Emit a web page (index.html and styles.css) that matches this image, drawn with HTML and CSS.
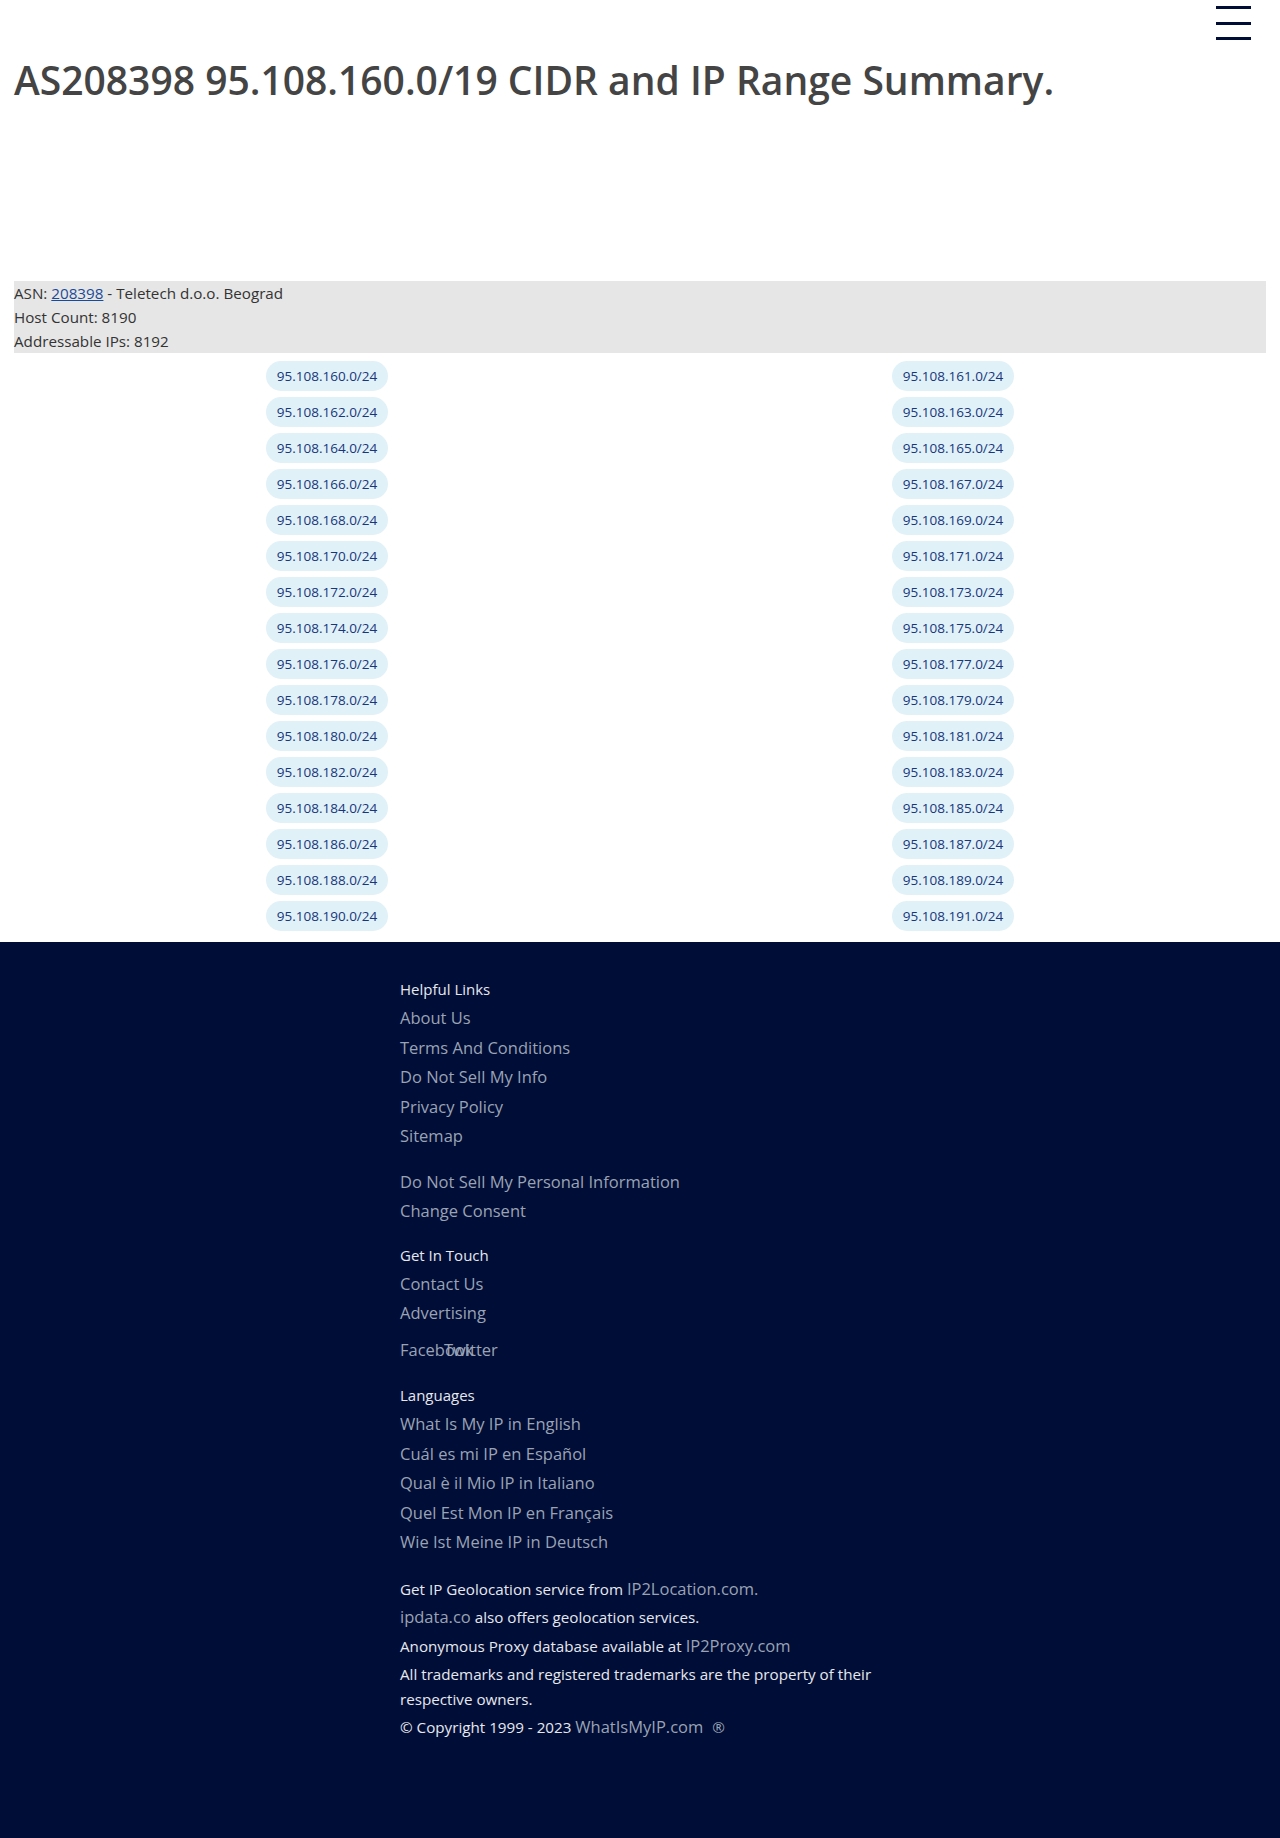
FILE: index.html
```html
<!DOCTYPE html>
<html lang="en">
<head>
<meta charset="utf-8">
<title>AS208398 95.108.160.0/19 CIDR and IP Range Summary.</title>
<link rel="stylesheet" href="styles.css">
</head>
<body>
<header class="topbar">
  <button class="burger" aria-label="Menu"><span></span><span></span><span></span></button>
</header>
<main class="page">
  <h1 class="title">AS208398 95.108.160.0/19 CIDR and IP Range Summary.</h1>
  <div class="adspace"></div>
  <div class="summary">
    <div>ASN: <a href="#">208398</a> - Teletech d.o.o. Beograd</div>
    <div>Host Count: 8190</div>
    <div>Addressable IPs: 8192</div>
  </div>
  <div class="ranges">
    <div class="cell"><a class="pill" href="#">95.108.160.0/24</a></div>
    <div class="cell"><a class="pill" href="#">95.108.161.0/24</a></div>
    <div class="cell"><a class="pill" href="#">95.108.162.0/24</a></div>
    <div class="cell"><a class="pill" href="#">95.108.163.0/24</a></div>
    <div class="cell"><a class="pill" href="#">95.108.164.0/24</a></div>
    <div class="cell"><a class="pill" href="#">95.108.165.0/24</a></div>
    <div class="cell"><a class="pill" href="#">95.108.166.0/24</a></div>
    <div class="cell"><a class="pill" href="#">95.108.167.0/24</a></div>
    <div class="cell"><a class="pill" href="#">95.108.168.0/24</a></div>
    <div class="cell"><a class="pill" href="#">95.108.169.0/24</a></div>
    <div class="cell"><a class="pill" href="#">95.108.170.0/24</a></div>
    <div class="cell"><a class="pill" href="#">95.108.171.0/24</a></div>
    <div class="cell"><a class="pill" href="#">95.108.172.0/24</a></div>
    <div class="cell"><a class="pill" href="#">95.108.173.0/24</a></div>
    <div class="cell"><a class="pill" href="#">95.108.174.0/24</a></div>
    <div class="cell"><a class="pill" href="#">95.108.175.0/24</a></div>
    <div class="cell"><a class="pill" href="#">95.108.176.0/24</a></div>
    <div class="cell"><a class="pill" href="#">95.108.177.0/24</a></div>
    <div class="cell"><a class="pill" href="#">95.108.178.0/24</a></div>
    <div class="cell"><a class="pill" href="#">95.108.179.0/24</a></div>
    <div class="cell"><a class="pill" href="#">95.108.180.0/24</a></div>
    <div class="cell"><a class="pill" href="#">95.108.181.0/24</a></div>
    <div class="cell"><a class="pill" href="#">95.108.182.0/24</a></div>
    <div class="cell"><a class="pill" href="#">95.108.183.0/24</a></div>
    <div class="cell"><a class="pill" href="#">95.108.184.0/24</a></div>
    <div class="cell"><a class="pill" href="#">95.108.185.0/24</a></div>
    <div class="cell"><a class="pill" href="#">95.108.186.0/24</a></div>
    <div class="cell"><a class="pill" href="#">95.108.187.0/24</a></div>
    <div class="cell"><a class="pill" href="#">95.108.188.0/24</a></div>
    <div class="cell"><a class="pill" href="#">95.108.189.0/24</a></div>
    <div class="cell"><a class="pill" href="#">95.108.190.0/24</a></div>
    <div class="cell"><a class="pill" href="#">95.108.191.0/24</a></div>
  </div>
</main>
<footer class="footer">
  <div class="footer-inner">
    <section class="fsec">
      <h4 class="fhead">Helpful Links</h4>
      <a class="flink" href="#">About Us</a>
      <a class="flink" href="#">Terms And Conditions</a>
      <a class="flink" href="#">Do Not Sell My Info</a>
      <a class="flink" href="#">Privacy Policy</a>
      <a class="flink" href="#">Sitemap</a>
    </section>
    <section class="fsec">
      <a class="flink" href="#">Do Not Sell My Personal Information</a>
      <a class="flink" href="#">Change Consent</a>
    </section>
    <section class="fsec">
      <h4 class="fhead">Get In Touch</h4>
      <a class="flink" href="#">Contact Us</a>
      <a class="flink" href="#">Advertising</a>
      <div class="social"><a class="flink fb" href="#">Facebook</a><a class="flink tw" href="#">Twitter</a></div>
    </section>
    <section class="fsec">
      <h4 class="fhead">Languages</h4>
      <a class="flink" href="#">What Is My IP in English</a>
      <a class="flink" href="#">Cuál es mi IP en Español</a>
      <a class="flink" href="#">Qual è il Mio IP in Italiano</a>
      <a class="flink" href="#">Quel Est Mon IP en Français</a>
      <a class="flink" href="#">Wie Ist Meine IP in Deutsch</a>
    </section>
    <section class="fsec legal">
      <p class="fline">Get IP Geolocation service from <a href="#">IP2Location.com.</a></p>
      <p class="fline"><a href="#">ipdata.co</a> also offers geolocation services.</p>
      <p class="fline">Anonymous Proxy database available at <a href="#">IP2Proxy.com</a></p>
      <p class="fline">All trademarks and registered trademarks are the property of their respective owners.</p>
      <p class="fline">© Copyright 1999 - 2023 <a href="#">WhatIsMyIP.com</a><span class="reg">®</span></p>
    </section>
  </div>
</footer>
</body>
</html>
```
FILE: styles.css
```css
html, body {
  margin: 0;
  padding: 0;
}
body {
  font-family: "Open Sans", "Noto Sans", "Liberation Sans", sans-serif;
  color: #333;
  background: #fff;
}
.topbar {
  display: flex;
  justify-content: flex-end;
  padding: 6px 29px 0 14px;
  height: 40px;
  box-sizing: border-box;
}
.burger {
  display: flex;
  flex-direction: column;
  justify-content: space-between;
  width: 35px;
  height: 34px;
  padding: 0;
  border: 0;
  background: none;
}
.burger span {
  display: block;
  height: 3px;
  background: #000d36;
}
.page {
  padding: 0 14px;
}
.title {
  margin: 14px 0 0;
  font-size: 39px;
  line-height: 52px;
  font-weight: 600;
  color: #444;
}
.adspace {
  height: 175px;
}
.summary {
  background: #e6e6e6;
  font-size: 15.2px;
  line-height: 24px;
  color: #333;
}
.summary a {
  color: #1a4a9a;
}
.ranges {
  display: grid;
  grid-template-columns: 1fr 1fr;
  row-gap: 6px;
  padding: 8px 0 11px;
}
.cell {
  display: flex;
  justify-content: center;
}
.pill {
  display: inline-block;
  height: 30px;
  line-height: 30px;
  padding: 0 11px;
  border-radius: 15px;
  background: #e1f1f8;
  color: #17377c;
  font-size: 13.5px;
  text-decoration: none;
}
.footer {
  background: #000d36;
  min-height: 896px;
  padding: 34px 0 100px;
  box-sizing: border-box;
}
.footer-inner {
  width: 480px;
  margin: 0 auto;
  display: flex;
  flex-direction: column;
  gap: 16px;
}
.fsec {
  display: flex;
  flex-direction: column;
  align-items: flex-start;
}
.fhead {
  margin: 0;
  font-size: 15px;
  line-height: 27px;
  font-weight: 400;
  color: #e6e8ee;
}
.flink {
  font-size: 16.5px;
  line-height: 29.5px;
  color: #9aa3b5;
  text-decoration: none;
}
.social {
  display: flex;
  margin: 7px 0 2px;
}
.social .fb {
  width: 44px;
  white-space: nowrap;
}
.legal {
  margin-top: 2px;
}
.fline {
  margin: 0;
  font-size: 15.2px;
  line-height: 24.5px;
  color: #e6e8ee;
  padding: 2px 0;
}
.fline a {
  color: #9aa3b5;
  text-decoration: none;
  font-size: 16.5px;
}
.reg {
  margin-left: 9px;
  color: #9aa3b5;
}
```
